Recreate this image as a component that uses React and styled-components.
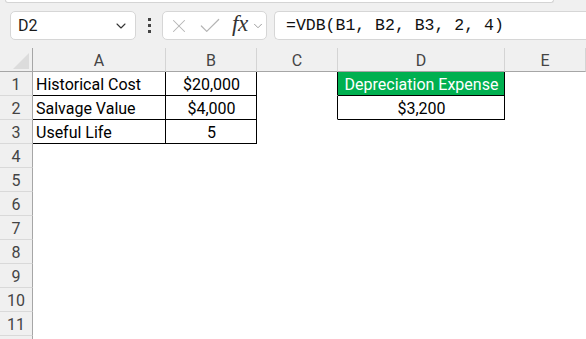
import React from 'react'
import styled, { createGlobalStyle } from 'styled-components'
import { ChevronDown, X, Check } from 'lucide-react'

const GlobalStyle = createGlobalStyle`
  html, body {
    margin: 0;
    padding: 0;
    width: 586px;
    height: 339px;
    overflow: hidden;
    background: #fff;
  }
  body {
    font-family: Roboto, "Liberation Sans", sans-serif;
  }
`

const Page = styled.div`
  width: 586px;
  height: 339px;
  overflow: hidden;
`

const Toolbar = styled.div`
  height: 48px;
  background: #f0f0f0;
  display: flex;
  flex-direction: column;
`

const RibbonEdge = styled.div`
  height: 2px;
  margin: 0 32px 0 5px;
  background: #fff;
  border: 1px solid #d4d4d4;
  border-top: none;
  border-radius: 0 0 6px 6px;
`

const FormulaRow = styled.div`
  display: flex;
  align-items: center;
  height: 29px;
  margin-top: 8px;
  padding-left: 10px;
`

const Box = styled.div`
  box-sizing: border-box;
  height: 29px;
  background: #fff;
  border: 1px solid #d6d6d6;
  border-radius: 5px;
  display: flex;
  align-items: center;
`

const NameBox = styled(Box)`
  width: 126px;
  padding: 0 6px 0 7px;
  justify-content: space-between;
  font-size: 16px;
  color: #1a1a1a;
`

const Dots = styled.div`
  display: flex;
  flex-direction: column;
  gap: 3px;
  margin: 0 11px 0 12px;
`

const Dot = styled.span`
  width: 3px;
  height: 3px;
  background: #444;
`

const FxGroup = styled(Box)`
  width: 105px;
  padding: 0 0 0 5px;
`

const FxIcon = styled.span`
  font-family: "Liberation Serif", serif;
  font-style: italic;
  font-size: 23px;
  color: #333;
  margin: -3px 3px 0 9px;
  letter-spacing: -0.5px;
`

const FormulaInput = styled(Box)`
  flex: 1;
  margin-left: 7px;
  border-right: none;
  border-radius: 5px 0 0 5px;
  padding-left: 11px;
  font-family: "Liberation Mono", monospace;
  font-size: 16.5px;
  color: #111;
`

const Sheet = styled.div`
  display: grid;
  grid-template-columns: 33px 133px 91px 81px 167px 81px;
  grid-auto-rows: 24px;
  font-size: 16px;
`

const Corner = styled.div`
  box-sizing: border-box;
  background: #f0f0f0;
  border-right: 1px solid #a6a6a6;
  border-bottom: 1px solid #a6a6a6;
  display: flex;
  align-items: flex-end;
  justify-content: flex-end;
  padding: 0 3px 2px 0;
`

const ColHeader = styled.div`
  box-sizing: border-box;
  background: #f0f0f0;
  border-right: 1px solid #d4d4d4;
  border-bottom: 1px solid #a6a6a6;
  color: #444;
  display: flex;
  align-items: center;
  justify-content: center;
  padding-top: 2px;
`

const RowHeader = styled.div`
  box-sizing: border-box;
  background: #f0f0f0;
  border-right: 1px solid #a6a6a6;
  border-bottom: 1px solid #d9d9d9;
  color: #444;
  display: flex;
  align-items: center;
  justify-content: center;
  padding-top: 1px;
`

const Cell = styled.div`
  box-sizing: border-box;
  border-right: 1px solid ${(p) => (p.$right ? '#000' : 'transparent')};
  border-bottom: 1px solid ${(p) => (p.$bottom ? '#000' : 'transparent')};
  background: ${(p) => (p.$fill ? '#00b050' : '#fff')};
  color: ${(p) => (p.$fill ? '#fff' : '#000')};
  display: flex;
  align-items: center;
  justify-content: ${(p) => (p.$center ? 'center' : 'flex-start')};
  padding: 2px 2px 0 3px;
  white-space: nowrap;
  overflow: hidden;
`

const columns = ['A', 'B', 'C', 'D', 'E']

const data = {
  1: [
    { text: 'Historical Cost', right: true, bottom: true },
    { text: '$20,000', center: true, right: true, bottom: true },
    { right: true },
    { text: 'Depreciation Expense', center: true, fill: true, right: true, bottom: true },
    {},
  ],
  2: [
    { text: 'Salvage Value', right: true, bottom: true },
    { text: '$4,000', center: true, right: true, bottom: true },
    { right: true },
    { text: '$3,200', center: true, right: true, bottom: true },
    {},
  ],
  3: [
    { text: 'Useful Life', right: true, bottom: true },
    { text: '5', center: true, right: true, bottom: true },
    {},
    {},
    {},
  ],
}

// row 12 only shows a sliver at the bottom edge, so it gets no label
const rows = Array.from({ length: 12 }, (_, i) => i + 1)

const App = () => {
  return (
    <Page>
      <GlobalStyle />
      <Toolbar>
        <RibbonEdge />
        <FormulaRow>
          <NameBox>
            <span>D2</span>
            <ChevronDown size={16} strokeWidth={1.6} color="#333" />
          </NameBox>
          <Dots>
            <Dot />
            <Dot />
            <Dot />
          </Dots>
          <FxGroup>
            <X size={22} strokeWidth={1.1} color="#b4b4b4" />
            <Check size={26} strokeWidth={1.1} color="#b4b4b4" style={{ marginLeft: 7 }} />
            <FxIcon>fx</FxIcon>
            <ChevronDown size={14} strokeWidth={1.4} color="#888" />
          </FxGroup>
          <FormulaInput>=VDB(B1, B2, B3, 2, 4)</FormulaInput>
        </FormulaRow>
      </Toolbar>
      <Sheet>
        <Corner>
          <svg width="16" height="16" viewBox="0 0 16 16">
            <polygon points="16,0 16,16 0,16" fill="#dcdcdc" />
          </svg>
        </Corner>
        {columns.map((c) => (
          <ColHeader key={c}>{c}</ColHeader>
        ))}
        {rows.map((r) => (
          <React.Fragment key={r}>
            <RowHeader>{r < 12 ? r : ''}</RowHeader>
            {columns.map((c, i) => {
              const cell = (data[r] && data[r][i]) || {}
              return (
                <Cell
                  key={c}
                  $right={cell.right}
                  $bottom={cell.bottom}
                  $center={cell.center}
                  $fill={cell.fill}
                >
                  {cell.text}
                </Cell>
              )
            })}
          </React.Fragment>
        ))}
      </Sheet>
    </Page>
  )
}

export default App
